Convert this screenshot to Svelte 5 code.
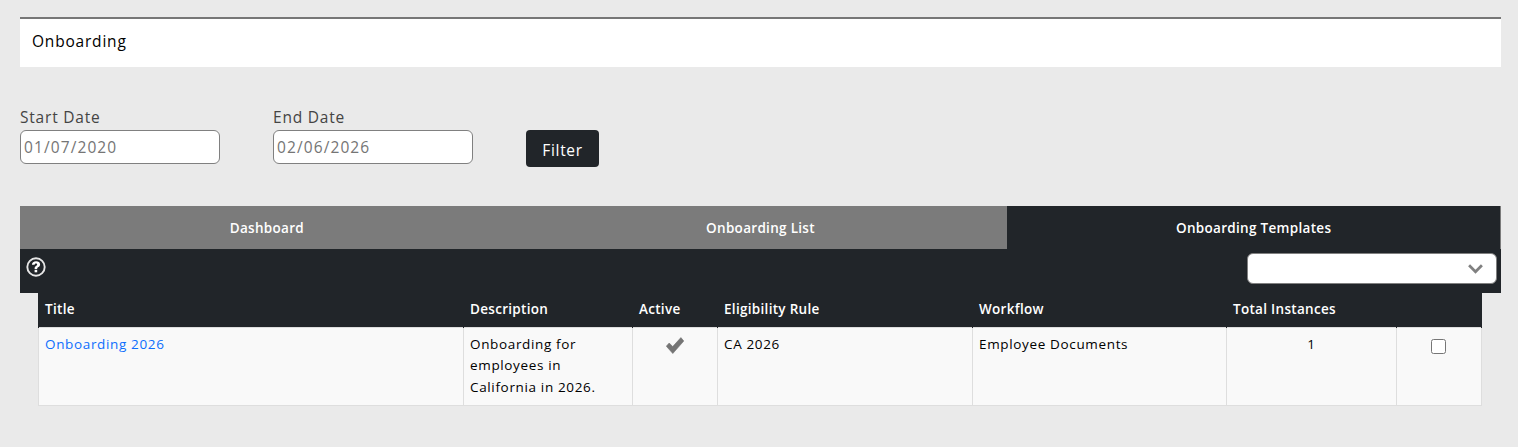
<script>
    let startDate = "01/07/2020";
    let endDate = "02/06/2026";
    let activeTab = "Onboarding Templates";
    const tabs = ["Dashboard", "Onboarding List", "Onboarding Templates"];
    const columns = ["Title", "Description", "Active", "Eligibility Rule", "Workflow", "Total Instances", ""];
</script>

<div class="page">
    <div class="title-panel">Onboarding</div>

    <div class="filters">
        <label class="field">
            <span>Start Date</span>
            <input type="text" bind:value={startDate} />
        </label>
        <label class="field second">
            <span>End Date</span>
            <input type="text" bind:value={endDate} />
        </label>
        <button class="filter-btn">Filter</button>
    </div>

    <div class="tabs">
        {#each tabs as tab}
            <button class="tab" class:active={tab === activeTab} on:click={() => (activeTab = tab)}>{tab}</button>
        {/each}
    </div>

    <div class="toolbar">
        <svg class="help" viewBox="0 0 20 20" width="20" height="20" aria-hidden="true">
            <circle cx="10" cy="10" r="8.7" fill="none" stroke="#e6e6e6" stroke-width="1.9" />
            <path d="M5.9 7.7c.1-2.1 1.7-3.4 4.2-3.4 2.4 0 4 1.2 4 3.1 0 1.3-.7 2-1.7 2.7-.9.6-1.2.9-1.2 1.6v.4H8.6v-.6c0-1.2.5-1.9 1.4-2.5.8-.5 1.2-.9 1.2-1.5 0-.7-.5-1.1-1.2-1.1-.8 0-1.3.5-1.4 1.3z" fill="#fff" />
            <rect x="8.6" y="12.8" width="2.6" height="2.5" fill="#fff" />
        </svg>
        <div class="select">
            <svg viewBox="0 0 18 12" width="17" height="11" aria-hidden="true">
                <path d="M2 2.5l7 7 7-7" fill="none" stroke="#808080" stroke-width="3" />
            </svg>
        </div>
    </div>

    <div class="table-wrap">
        <table>
            <thead>
                <tr>
                    {#each columns as col}
                        <th>{col}</th>
                    {/each}
                </tr>
            </thead>
            <tbody>
                <tr>
                    <td><a href="#top">Onboarding 2026</a></td>
                    <td class="desc">Onboarding for employees in California in 2026.</td>
                    <td class="center">
                        <svg class="tick" viewBox="0 0 18 17" width="18" height="17" aria-hidden="true">
                            <path d="M.3 9.2 3.2 6l3.5 3.6L14.9.6 17.8 4 6.8 16.5z" fill="#757575" stroke="#757575" stroke-width=".6" stroke-linejoin="round" />
                        </svg>
                    </td>
                    <td>CA 2026</td>
                    <td>Employee Documents</td>
                    <td class="center">1</td>
                    <td class="center check"><input type="checkbox" /></td>
                </tr>
            </tbody>
        </table>
    </div>
</div>

<style>
    :global(body) {
        margin: 0;
        background: #eaeaea;
    }

    .page {
        padding: 17px 17px 0 20px;
        font-family: "Open Sans", "Liberation Sans", sans-serif;
        font-size: 13.5px;
        letter-spacing: 0.65px;
        color: #000;
    }

    .title-panel {
        height: 48px;
        line-height: 44px;
        padding-left: 12px;
        background: #fff;
        border-top: 2px solid #777;
        font-size: 15.5px;
        letter-spacing: 0.8px;
    }

    .filters {
        display: flex;
        align-items: flex-start;
        margin-top: 41px;
        height: 98px;
    }

    .field {
        display: flex;
        flex-direction: column;
        width: 200px;
        font-size: 15.5px;
        letter-spacing: 0.8px;
        color: #444;
    }

    .field span {
        height: 22px;
        line-height: 18px;
    }

    .field.second {
        margin-left: 53px;
    }

    .field input {
        box-sizing: border-box;
        width: 200px;
        height: 34px;
        padding: 0 3px;
        border: 1px solid #808080;
        border-radius: 6px;
        background: #fff;
        font: inherit;
        letter-spacing: 1.1px;
        color: #757575;
    }

    .filter-btn {
        margin: 22px 0 0 53px;
        width: 73px;
        height: 37px;
        padding: 2px 0 0;
        border: 0;
        border-radius: 4px;
        background: #212529;
        color: #fff;
        font: inherit;
        font-size: 15.5px;
        letter-spacing: 0.7px;
    }

    .tabs {
        display: grid;
        grid-template-columns: repeat(3, 1fr);
        height: 43px;
    }

    .tab {
        border: 0;
        background: #7b7b7b;
        color: #fff;
        font: inherit;
        font-weight: 600;
        letter-spacing: 0.3px;
        padding: 0;
    }

    .tab.active {
        background: #212529;
        border-right: 1px solid #7b7b7b;
    }

    .toolbar {
        display: flex;
        justify-content: space-between;
        height: 44px;
        background: #212529;
        padding: 8px 4px 0 6px;
        box-sizing: border-box;
    }

    .select {
        box-sizing: border-box;
        display: flex;
        align-items: center;
        justify-content: flex-end;
        width: 250px;
        height: 31px;
        margin-top: -4px;
        padding-right: 12px;
        background: #fff;
        border: 1px solid #808080;
        border-radius: 6px;
    }

    .table-wrap {
        margin: 0 19px 0 18px;
    }

    table {
        width: 100%;
        table-layout: fixed;
        border-collapse: collapse;
    }

    th:nth-child(1) { width: 425px; }
    th:nth-child(2) { width: 169px; }
    th:nth-child(3) { width: 85px; }
    th:nth-child(4) { width: 255px; }
    th:nth-child(5) { width: 254px; }
    th:nth-child(6) { width: 170px; }
    th:nth-child(7) { width: 85px; }

    th {
        box-sizing: border-box;
        height: 34px;
        padding: 0 6px 1px;
        background: #212529;
        border-left: 1px solid #212529;
        border-right: 1px solid #212529;
        color: #fff;
        text-align: left;
        font-weight: 600;
        letter-spacing: 0.3px;
    }

    td {
        height: 78px;
        box-sizing: border-box;
        padding: 6px 6px;
        background: #f9f9f9;
        border: 1px solid #dedede;
        vertical-align: top;
        line-height: 21.5px;
    }

    td a {
        color: #0d6efd;
        text-decoration: none;
    }

    .desc {
        padding-right: 30px;
    }

    .center {
        text-align: center;
    }

    .tick {
        display: block;
        margin: 3px auto 0;
    }

    .check input {
        width: 15px;
        height: 15px;
        margin: 5px 2px 0 0;
    }
</style>
